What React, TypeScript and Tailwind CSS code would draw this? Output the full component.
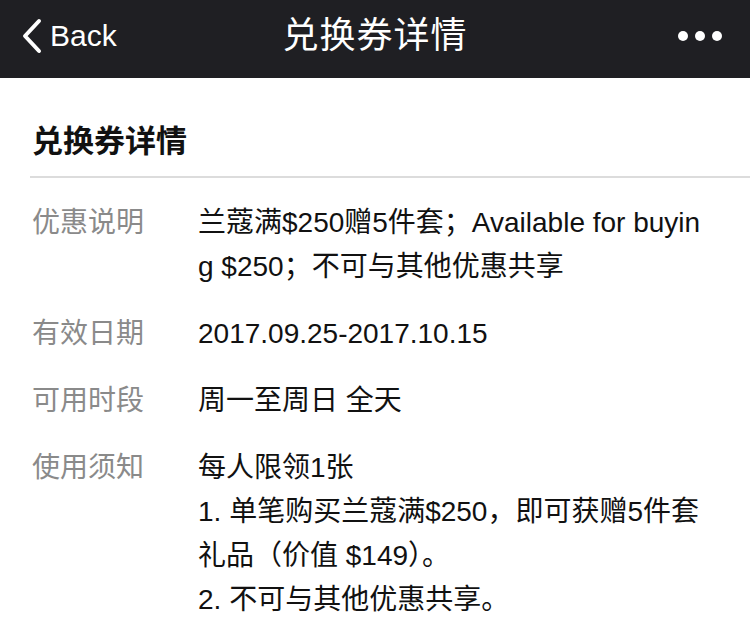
const rows: { label: string; lines: string[] }[] = [
  {
    label: "优惠说明",
    lines: ["兰蔻满$250赠5件套；Available for buyin", "g $250；不可与其他优惠共享"],
  },
  { label: "有效日期", lines: ["2017.09.25-2017.10.15"] },
  { label: "可用时段", lines: ["周一至周日 全天"] },
  {
    label: "使用须知",
    lines: [
      "每人限领1张",
      "1. 单笔购买兰蔻满$250，即可获赠5件套",
      "礼品（价值 $149）。",
      "2. 不可与其他优惠共享。",
    ],
  },
];

export default function App() {
  return (
    <div
      className="w-[750px] h-[638px] bg-white overflow-hidden"
      style={{ fontFamily: '"Liberation Sans", "Noto Sans CJK SC", sans-serif' }}
    >
      <div className="h-[78px] bg-[#1f1f23] flex items-center justify-between px-[22px] pb-[7px] text-white">
        <div className="flex items-center gap-[8px] w-[160px]">
          <svg width="20" height="36" viewBox="0 0 20 36" fill="none">
            <path d="M17 3 L3 18 L17 33" stroke="white" strokeWidth="4" strokeLinecap="round" strokeLinejoin="round" />
          </svg>
          <span className="text-[30px] leading-none">Back</span>
        </div>
        <div className="text-[36px] leading-none tracking-[1px]">兑换券详情</div>
        <div className="w-[160px] flex justify-end gap-[7px] pr-[6px]">
          <span className="w-[10px] h-[10px] rounded-full bg-white" />
          <span className="w-[10px] h-[10px] rounded-full bg-white" />
          <span className="w-[10px] h-[10px] rounded-full bg-white" />
        </div>
      </div>

      <div className="pl-[30px]">
        <div className="h-[100px] flex items-end pb-[11px] border-b-2 border-[#dcdcdc]">
          <span className="text-[31px] font-bold text-[#111] pl-[2px]">兑换券详情</span>
        </div>
      </div>

      <div className="px-[32px] pt-[23px] flex flex-col gap-[23px]">
        {rows.map((row) => (
          <div key={row.label} className="flex text-[28px] leading-[44px]">
            <div className="w-[166px] shrink-0 text-[#8a8a8a]">{row.label}</div>
            <div className="text-[#111] whitespace-nowrap">
              {row.lines.map((line) => (
                <div key={line}>{line}</div>
              ))}
            </div>
          </div>
        ))}
      </div>
    </div>
  );
}
